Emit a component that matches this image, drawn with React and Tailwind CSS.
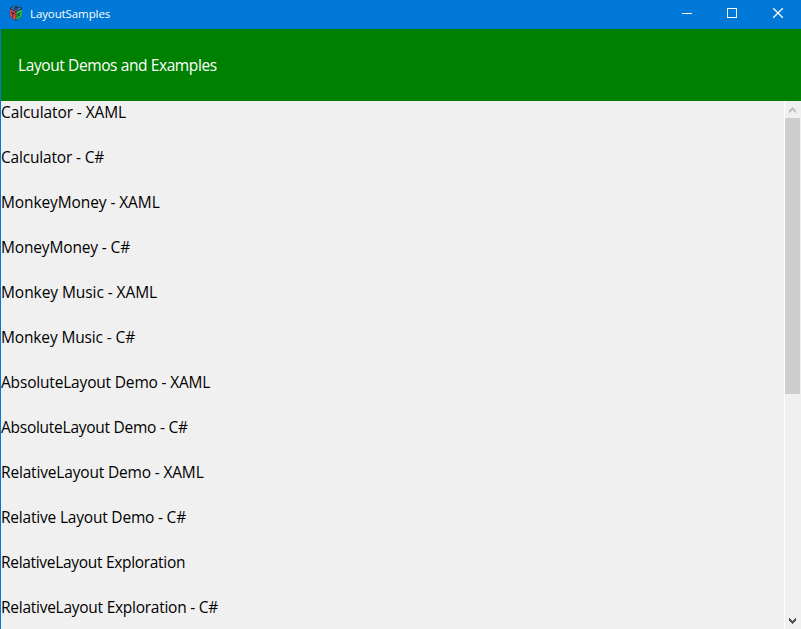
const samples = [
  { label: 'Calculator - XAML', tracking: 'tracking-[-0.1px]' },
  { label: 'Calculator - C#', tracking: 'tracking-[-0.18px]' },
  { label: 'MonkeyMoney - XAML', tracking: 'tracking-[-0.1px]' },
  { label: 'MoneyMoney - C#', tracking: 'tracking-[-0.15px]' },
  { label: 'Monkey Music - XAML', tracking: 'tracking-[-0.07px]' },
  { label: 'Monkey Music - C#', tracking: 'tracking-[-0.14px]' },
  { label: 'AbsoluteLayout Demo - XAML', tracking: 'tracking-[-0.18px]' },
  { label: 'AbsoluteLayout Demo - C#', tracking: 'tracking-[-0.26px]' },
  { label: 'RelativeLayout Demo - XAML', tracking: 'tracking-[-0.17px]' },
  { label: 'Relative Layout Demo - C#', tracking: 'tracking-[-0.2px]' },
  { label: 'RelativeLayout Exploration', tracking: 'tracking-[-0.31px]' },
  { label: 'RelativeLayout Exploration - C#', tracking: 'tracking-[-0.26px]' },
];

function AppIcon() {
  return (
    <svg className="h-4 w-4" viewBox="0 0 16 16">
      <path d="M8 0.3 L14 3 V11.5 L8 15.7 L2 11.5 V3 Z" fill="#15202c" />
      <path d="M8 0.8 L13.4 3.4 L8 6.2 L2.6 3.4 Z" fill="#3f78d8" />
      <path d="M2.2 4.3 L7.6 7 V15 L2.2 11.5 Z" fill="#f04a4a" />
      <path d="M13.8 4.3 L8.4 7 V15 L13.8 11.5 Z" fill="#2ccc55" />
      <path d="M10 2.5 H7 L6 4 H10" stroke="#15202c" fill="none" />
      <path d="M3 7 L6.8 8.7 M4.9 8 V12.3" stroke="#15202c" fill="none" />
      <path d="M10 8.2 V12.5 M12.6 7 L10.5 9.7 L12.6 11" stroke="#15202c" fill="none" strokeWidth="0.9" />
    </svg>
  );
}

function TitleBar() {
  return (
    <header className="flex h-[29px] shrink-0 items-start justify-between bg-[#0078d7] text-white">
      <div className="flex h-[26px] items-center gap-[6px] pl-2">
        <AppIcon />
        <span className="pt-px text-[11.5px] leading-4 tracking-[-0.1px]">LayoutSamples</span>
      </div>
      <div className="flex">
        <svg className="h-[29px] w-[46px]" viewBox="0 0 46 29" shapeRendering="crispEdges">
          <path d="M18 13.5 H28" stroke="white" />
        </svg>
        <svg className="h-[29px] w-[45px]" viewBox="0 0 45 29" shapeRendering="crispEdges">
          <path d="M17.5 8.5 H26.5 V17.5 H17.5 Z" stroke="white" fill="none" />
        </svg>
        <svg className="h-[29px] w-[46px]" viewBox="0 0 46 29">
          <path d="M18.2 8.2 L27.8 17.8 M27.8 8.2 L18.2 17.8" stroke="white" strokeWidth="1.3" />
        </svg>
      </div>
    </header>
  );
}

function ScrollBar() {
  return (
    <div className="flex w-[17px] shrink-0 flex-col border-l border-white bg-[#f0f0f0]">
      <svg className="h-[17px] w-4" viewBox="0 0 16 17" shapeRendering="crispEdges">
        <path d="M7 6h1v1h1v1h1v1h1v3h-1v-1h-1v-1h-1v-1h-1v1h-1v1h-1v1h-1v-3h1v-1h1v-1h1z" fill="#bfbfbf" />
      </svg>
      <div className="h-[276px] w-[15px] bg-[#cdcdcd]" />
      <svg className="mt-auto h-[17px] w-4" viewBox="0 0 16 17" shapeRendering="crispEdges">
        <path d="M7 12h1v-1h1v-1h1v-1h1v-3h-1v1h-1v1h-1v1h-1v-1h-1v-1h-1v-1h-1v3h1v1h1v1h1z" fill="#505050" />
      </svg>
    </div>
  );
}

export default function App() {
  return (
    <div className="flex h-[629px] w-[801px] flex-col overflow-hidden bg-[#f0f0f0] font-['Open_Sans',sans-serif]">
      <TitleBar />
      <div className="flex min-h-0 flex-1 flex-col border-l border-[#0078d7]">
        <div className="flex h-[72px] shrink-0 items-center bg-[#008000] pt-0.5 pl-[17px] text-[15.5px] tracking-[-0.4px] text-white">
          <h1>Layout Demos and Examples</h1>
        </div>
        <div className="flex min-h-0 flex-1">
          <ul className="min-w-0 flex-1 overflow-hidden">
            {samples.map(({ label, tracking }) => (
              <li key={label} className={`h-[45px] whitespace-nowrap text-[15.5px] leading-[22px] text-black ${tracking}`}>
                {label}
              </li>
            ))}
          </ul>
          <ScrollBar />
        </div>
      </div>
    </div>
  );
}
